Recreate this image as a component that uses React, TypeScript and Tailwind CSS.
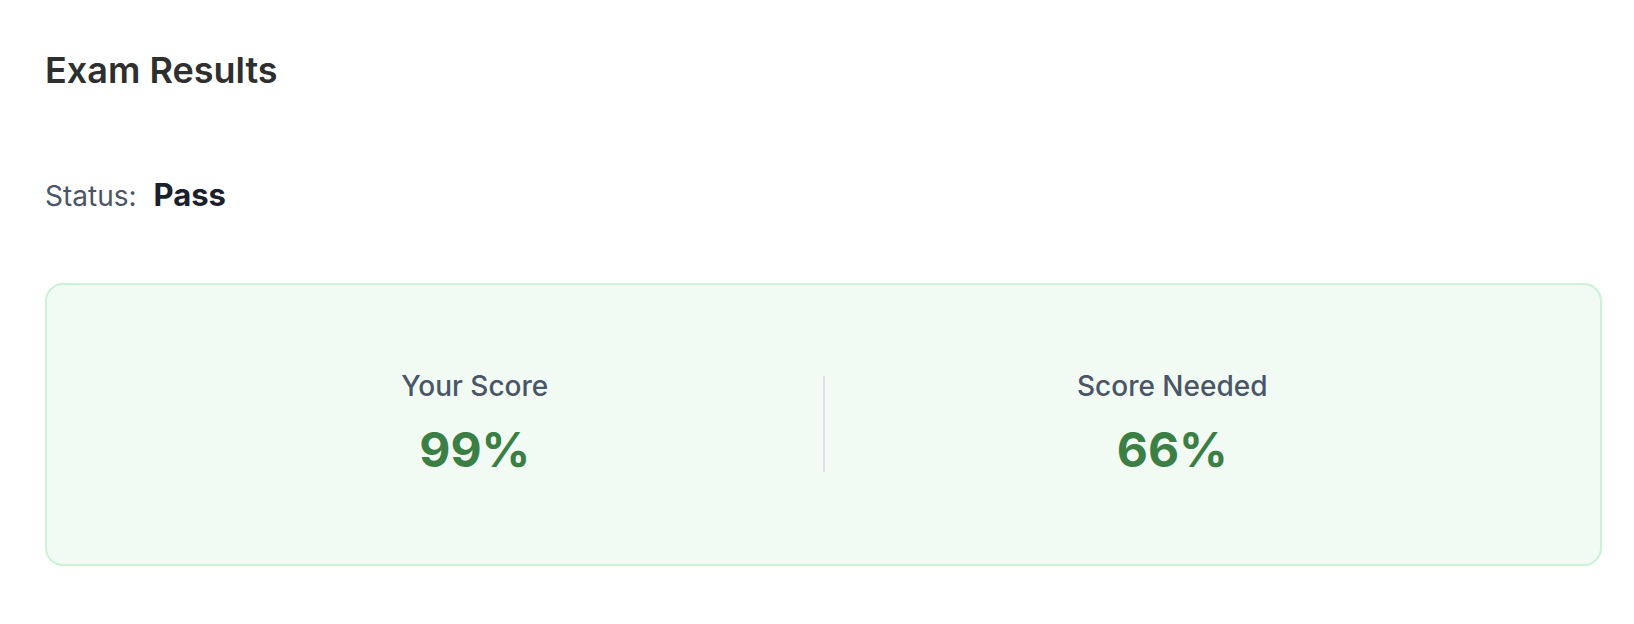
export default function App() {
  return (
    <div className="min-h-screen bg-white pl-[45px] pr-[32px] pt-[49px] font-['Inter','Liberation_Sans',sans-serif]">
      <h1 className="text-[36px] font-semibold leading-[1.2] text-[#2f2f2f]">Exam Results</h1>

      <div className="mt-[80px] flex items-baseline gap-[17px]">
        <span className="text-[28px] text-[#4a5568]">Status:</span>
        <span className="text-[31px] font-bold text-[#1a202c]">Pass</span>
      </div>

      <div className="mt-[64px] flex h-[283px] items-center rounded-[18px] border-2 border-[#c9f3d3] bg-[#f1fbf4] px-20">
        <ScoreColumn label="Your Score" value="99%" />
        <div className="h-[96px] w-[2px] bg-[#dde2ea]" />
        <ScoreColumn label="Score Needed" value="66%" />
      </div>
    </div>
  )
}

function ScoreColumn({ label, value }: { label: string; value: string }) {
  return (
    <div className="flex flex-1 flex-col items-center">
      <p className="text-[28px] font-medium leading-[1.2] text-[#4a5568]">{label}</p>
      <p className="mt-[18px] text-[48px] font-bold leading-[1.2] text-[#3b7f45]">{value}</p>
    </div>
  )
}
